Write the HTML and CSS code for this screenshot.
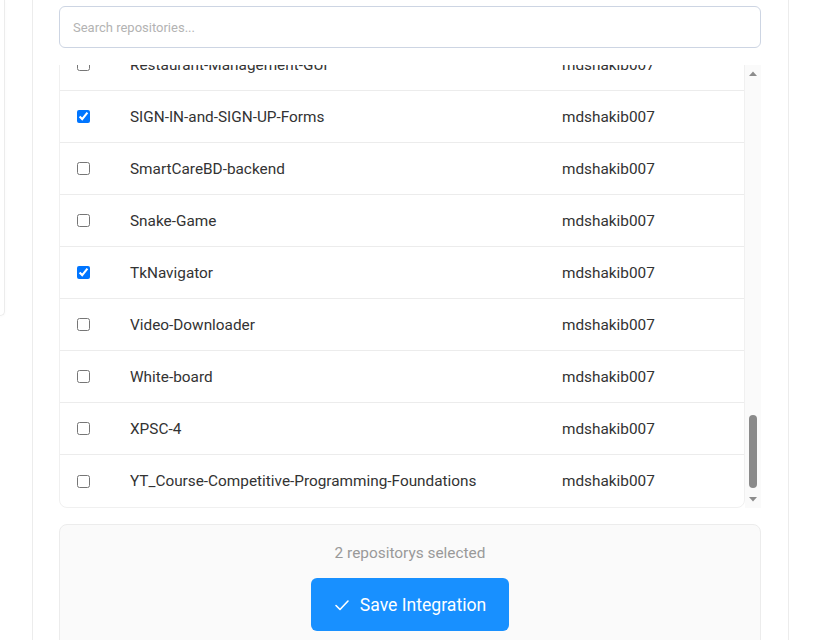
FILE: index.html
```html
<!DOCTYPE html>
<html lang="en">
<head>
<meta charset="utf-8">
<title>Repositories</title>
<link rel="stylesheet" href="styles.css">
</head>
<body>
<div class="page">
  <aside class="sidebar"></aside>
  <main class="card">
    <input class="search" type="text" placeholder="Search repositories...">
    <div class="list">
      <div class="viewport" id="repo-list">
        <div class="table">
          <div class="row"><span class="cell-check"><input type="checkbox"></span><span class="name">AI-Chatbot</span><span class="owner">mdshakib007</span></div>
          <div class="row"><span class="cell-check"><input type="checkbox"></span><span class="name">Algorithm-Visualizer</span><span class="owner">mdshakib007</span></div>
          <div class="row"><span class="cell-check"><input type="checkbox"></span><span class="name">Android-Notes-App</span><span class="owner">mdshakib007</span></div>
          <div class="row"><span class="cell-check"><input type="checkbox"></span><span class="name">Assignment-1</span><span class="owner">mdshakib007</span></div>
          <div class="row"><span class="cell-check"><input type="checkbox"></span><span class="name">Blog-Website</span><span class="owner">mdshakib007</span></div>
          <div class="row"><span class="cell-check"><input type="checkbox"></span><span class="name">Bookstore-API</span><span class="owner">mdshakib007</span></div>
          <div class="row"><span class="cell-check"><input type="checkbox"></span><span class="name">Calculator-App</span><span class="owner">mdshakib007</span></div>
          <div class="row"><span class="cell-check"><input type="checkbox"></span><span class="name">Chess-Engine</span><span class="owner">mdshakib007</span></div>
          <div class="row"><span class="cell-check"><input type="checkbox"></span><span class="name">Codeforces-Solutions</span><span class="owner">mdshakib007</span></div>
          <div class="row"><span class="cell-check"><input type="checkbox"></span><span class="name">CP-Templates</span><span class="owner">mdshakib007</span></div>
          <div class="row"><span class="cell-check"><input type="checkbox"></span><span class="name">Data-Structures</span><span class="owner">mdshakib007</span></div>
          <div class="row"><span class="cell-check"><input type="checkbox"></span><span class="name">Django-Ecommerce</span><span class="owner">mdshakib007</span></div>
          <div class="row"><span class="cell-check"><input type="checkbox"></span><span class="name">Dotfiles</span><span class="owner">mdshakib007</span></div>
          <div class="row"><span class="cell-check"><input type="checkbox"></span><span class="name">Expense-Tracker</span><span class="owner">mdshakib007</span></div>
          <div class="row"><span class="cell-check"><input type="checkbox"></span><span class="name">Face-Detection</span><span class="owner">mdshakib007</span></div>
          <div class="row"><span class="cell-check"><input type="checkbox"></span><span class="name">Flask-Todo</span><span class="owner">mdshakib007</span></div>
          <div class="row"><span class="cell-check"><input type="checkbox"></span><span class="name">Hangman-Game</span><span class="owner">mdshakib007</span></div>
          <div class="row"><span class="cell-check"><input type="checkbox"></span><span class="name">Hospital-Management</span><span class="owner">mdshakib007</span></div>
          <div class="row"><span class="cell-check"><input type="checkbox"></span><span class="name">Image-Gallery</span><span class="owner">mdshakib007</span></div>
          <div class="row"><span class="cell-check"><input type="checkbox"></span><span class="name">Inventory-System</span><span class="owner">mdshakib007</span></div>
          <div class="row"><span class="cell-check"><input type="checkbox"></span><span class="name">Java-Projects</span><span class="owner">mdshakib007</span></div>
          <div class="row"><span class="cell-check"><input type="checkbox"></span><span class="name">Landing-Page</span><span class="owner">mdshakib007</span></div>
          <div class="row"><span class="cell-check"><input type="checkbox"></span><span class="name">LeetCode-Solutions</span><span class="owner">mdshakib007</span></div>
          <div class="row"><span class="cell-check"><input type="checkbox"></span><span class="name">Library-Management</span><span class="owner">mdshakib007</span></div>
          <div class="row"><span class="cell-check"><input type="checkbox"></span><span class="name">Login-System</span><span class="owner">mdshakib007</span></div>
          <div class="row"><span class="cell-check"><input type="checkbox"></span><span class="name">Markdown-Editor</span><span class="owner">mdshakib007</span></div>
          <div class="row"><span class="cell-check"><input type="checkbox"></span><span class="name">mdshakib007</span><span class="owner">mdshakib007</span></div>
          <div class="row"><span class="cell-check"><input type="checkbox"></span><span class="name">Movie-Recommender</span><span class="owner">mdshakib007</span></div>
          <div class="row"><span class="cell-check"><input type="checkbox"></span><span class="name">Music-Player</span><span class="owner">mdshakib007</span></div>
          <div class="row"><span class="cell-check"><input type="checkbox"></span><span class="name">Note-Taking-App</span><span class="owner">mdshakib007</span></div>
          <div class="row"><span class="cell-check"><input type="checkbox"></span><span class="name">Online-Judge</span><span class="owner">mdshakib007</span></div>
          <div class="row"><span class="cell-check"><input type="checkbox"></span><span class="name">Pathfinding-Visualizer</span><span class="owner">mdshakib007</span></div>
          <div class="row"><span class="cell-check"><input type="checkbox"></span><span class="name">Personal-Portfolio</span><span class="owner">mdshakib007</span></div>
          <div class="row"><span class="cell-check"><input type="checkbox"></span><span class="name">Pong-Game</span><span class="owner">mdshakib007</span></div>
          <div class="row"><span class="cell-check"><input type="checkbox"></span><span class="name">Python-Scripts</span><span class="owner">mdshakib007</span></div>
          <div class="row"><span class="cell-check"><input type="checkbox"></span><span class="name">Quiz-App</span><span class="owner">mdshakib007</span></div>
          <div class="row"><span class="cell-check"><input type="checkbox"></span><span class="name">React-Dashboard</span><span class="owner">mdshakib007</span></div>
          <div class="row"><span class="cell-check"><input type="checkbox"></span><span class="name">Restaurant-Management-GUI</span><span class="owner">mdshakib007</span></div>
          <div class="row"><span class="cell-check"><input type="checkbox" checked></span><span class="name">SIGN-IN-and-SIGN-UP-Forms</span><span class="owner">mdshakib007</span></div>
          <div class="row"><span class="cell-check"><input type="checkbox"></span><span class="name">SmartCareBD-backend</span><span class="owner">mdshakib007</span></div>
          <div class="row"><span class="cell-check"><input type="checkbox"></span><span class="name">Snake-Game</span><span class="owner">mdshakib007</span></div>
          <div class="row"><span class="cell-check"><input type="checkbox" checked></span><span class="name">TkNavigator</span><span class="owner">mdshakib007</span></div>
          <div class="row"><span class="cell-check"><input type="checkbox"></span><span class="name">Video-Downloader</span><span class="owner">mdshakib007</span></div>
          <div class="row"><span class="cell-check"><input type="checkbox"></span><span class="name">White-board</span><span class="owner">mdshakib007</span></div>
          <div class="row"><span class="cell-check"><input type="checkbox"></span><span class="name">XPSC-4</span><span class="owner">mdshakib007</span></div>
          <div class="row"><span class="cell-check"><input type="checkbox"></span><span class="name">YT_Course-Competitive-Programming-Foundations</span><span class="owner">mdshakib007</span></div>
        </div>
      </div>
      <div class="scrollbar" aria-hidden="true">
        <div class="arrow"><svg width="10" height="7" viewBox="0 0 10 7"><polygon points="1,6 9,6 5,1.5" fill="#8c8c8c"/></svg></div>
        <div class="track"><div class="thumb"></div></div>
        <div class="arrow"><svg width="10" height="7" viewBox="0 0 10 7"><polygon points="1,1 9,1 5,5.5" fill="#8c8c8c"/></svg></div>
      </div>
    </div>
    <div class="footer">
      <p class="count">2 repositorys selected</p>
      <button class="save" type="button">
        <svg class="check" width="16" height="16" viewBox="0 0 16 16" aria-hidden="true"><polyline points="2,8.5 6,12.5 14,4" fill="none" stroke="#fff" stroke-width="1.6" stroke-linecap="round" stroke-linejoin="round"/></svg>
        <span>Save Integration</span>
      </button>
    </div>
  </main>
</div>
<script src="script.js"></script>
</body>
</html>
```

FILE: styles.css
```css
* { box-sizing: border-box; }

body {
  margin: 0;
  background: #ffffff;
  font-family: Roboto, "Liberation Sans", Arial, sans-serif;
  color: #333333;
}

.page {
  display: flex;
  align-items: flex-start;
  gap: 27px;
  height: 640px;
  overflow: hidden;
}

.sidebar {
  width: 5px;
  height: 316px;
  flex: none;
  background: #fff;
  border-right: 1px solid #ececec;
  border-bottom: 1px solid #ececec;
  border-bottom-right-radius: 8px;
  box-shadow: 0 1px 3px rgba(0,0,0,0.03);
}

.card {
  width: 757px;
  flex: none;
  min-height: 700px;
  background: #fff;
  border-left: 1px solid #ececec;
  border-right: 1px solid #ececec;
  padding: 6px 26px 0 26px;
}

.search {
  display: block;
  width: 702px;
  height: 42px;
  border: 1px solid #cdd5e3;
  border-radius: 6px;
  padding: 0 13px;
  font-family: inherit;
  font-size: 13px;
  color: #333;
  outline: none;
  background: #fff;
}
.search::placeholder { color: #b3b3b3; }

.list {
  display: flex;
  margin-top: 17px;
  width: 702px;
  height: 443px;
}

.viewport {
  flex: 1;
  overflow: hidden;
}

.table {
  border: 1px solid #f0f0f0;
  border-radius: 8px;
}

.row {
  display: grid;
  grid-template-columns: 70px 432px 1fr;
  align-items: center;
  height: 52px;
  border-bottom: 1px solid #ececec;
  font-size: 15.35px;
  color: #333;
}
.row:last-child { border-bottom: none; }

.cell-check {
  padding-left: 17px;
  display: flex;
  align-items: center;
}
.cell-check input {
  margin: 0;
  width: 13px;
  height: 13px;
}

.scrollbar {
  width: 16px;
  flex: none;
  display: flex;
  flex-direction: column;
  background: #fafafa;
}

.arrow {
  height: 17px;
  display: flex;
  align-items: center;
  justify-content: center;
}

.track {
  flex: 1;
  display: flex;
  flex-direction: column;
  justify-content: flex-end;
  align-items: center;
  padding-bottom: 3px;
}

.thumb {
  width: 8px;
  height: 73px;
  border-radius: 4px;
  background: #8a8a8a;
}

.footer {
  margin-top: 16px;
  width: 702px;
  background: #fafafa;
  border: 1px solid #ececec;
  border-radius: 8px;
  padding: 18px 0 40px;
  text-align: center;
}

.count {
  margin: 0 0 15px;
  font-size: 15.4px;
  line-height: 20px;
  color: #999999;
}

.save {
  display: inline-flex;
  align-items: center;
  justify-content: center;
  gap: 10px;
  width: 198px;
  height: 53px;
  border: none;
  border-radius: 6px;
  background: #1890ff;
  color: #fff;
  font-family: inherit;
  font-size: 17.6px;
  cursor: pointer;
}
.check { flex: none; }
```

FILE: script.js
```js
var list = document.getElementById('repo-list');
list.scrollTop = list.scrollHeight;
```
